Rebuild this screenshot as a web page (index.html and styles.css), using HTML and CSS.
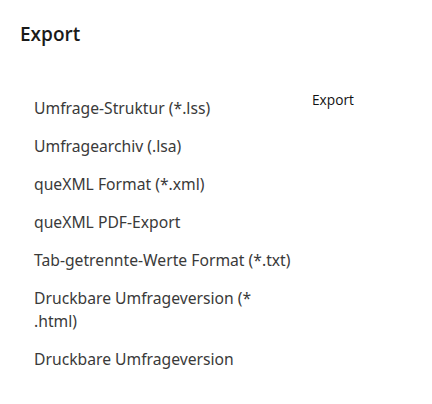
FILE: index.html
```html
<!DOCTYPE html>
<html>
<head>
<meta charset="utf-8">
<link rel="stylesheet" href="styles.css">
</head>
<body>
<div class="page">
  <h1 class="title">Export</h1>
  <div class="row">
    <ul class="list">
      <li>Umfrage-Struktur (*.lss)</li>
      <li>Umfragearchiv (.lsa)</li>
      <li>queXML Format (*.xml)</li>
      <li>queXML PDF-Export</li>
      <li>Tab-getrennte-Werte Format (*.txt)</li>
      <li>Druckbare Umfrageversion (*<wbr>.html)</li>
      <li>Druckbare Umfrageversion</li>
    </ul>
    <div class="side">Export</div>
  </div>
</div>
</body>
</html>
```
FILE: styles.css
```css
html, body {
  margin: 0;
  padding: 0;
  background: #fff;
}
.page {
  padding: 21px 20px 0 20px;
}
.title {
  margin: 0;
  font-family: "Open Sans", sans-serif;
  font-weight: 600;
  font-size: 19px;
  line-height: 26px;
  color: #1a1a1a;
}
.row {
  display: flex;
  margin-top: 39px;
}
.list {
  list-style: none;
  margin: 0;
  padding: 11px 0 0 14px;
  width: 257px;
  font-family: "Noto Sans", sans-serif;
  font-size: 15.7px;
  line-height: 23px;
  color: #3a3a3a;
}
.list li {
  margin-bottom: 15px;
}
.side {
  margin-left: 21px;
  margin-top: 4px;
  font-family: "Open Sans", sans-serif;
  font-weight: 500;
  font-size: 13.7px;
  color: #111;
}
```
